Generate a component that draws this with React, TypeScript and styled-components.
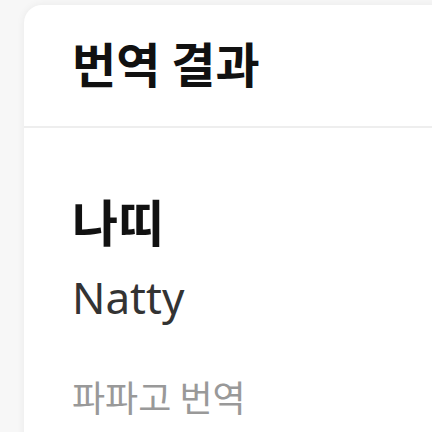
import React from "react";
import styled, { createGlobalStyle } from "styled-components";

const GlobalStyle = createGlobalStyle`
  html, body {
    margin: 0;
    padding: 0;
    background: #f7f7f7;
  }
  body {
    font-family: "Noto Sans", "Noto Sans CJK KR", sans-serif;
    overflow: hidden;
  }
`;

const Page = styled.div`
  padding: 5px 0 0 24px;
  height: 432px;
  box-sizing: border-box;
  overflow: hidden;
`;

const Card = styled.section`
  width: 420px;
  height: 440px;
  background: #fff;
  border-radius: 18px 0 0 0;
  box-shadow: 0 0 8px rgba(0, 0, 0, 0.06);
  overflow: hidden;
`;

const Header = styled.header`
  height: 123px;
  box-sizing: border-box;
  display: flex;
  align-items: center;
  padding: 0 0 8px 48px;
  border-bottom: 2px solid #eeeeee;
`;

const Title = styled.h1`
  margin: 0;
  font-family: "Noto Sans CJK KR", sans-serif;
  font-size: 48px;
  font-weight: 700;
  color: #111;
`;

const Body = styled.div`
  padding: 60px 0 0 48px;
  display: flex;
  flex-direction: column;
`;

const Word = styled.div`
  font-family: "Noto Sans CJK KR", sans-serif;
  font-size: 50px;
  font-weight: 700;
  color: #111;
  line-height: 64px;
`;

const Reading = styled.div`
  margin-top: 15px;
  font-size: 44px;
  color: #333;
  line-height: 60px;
`;

const Source = styled.div`
  margin-top: 45px;
  font-family: "Noto Sans CJK KR", sans-serif;
  font-size: 36px;
  color: #999;
  line-height: 48px;
`;

export default function App() {
  return (
    <>
      <GlobalStyle />
      <Page>
        <Card>
          <Header>
            <Title>번역 결과</Title>
          </Header>
          <Body>
            <Word>나띠</Word>
            <Reading>Natty</Reading>
            <Source>파파고 번역</Source>
          </Body>
        </Card>
      </Page>
    </>
  );
}
